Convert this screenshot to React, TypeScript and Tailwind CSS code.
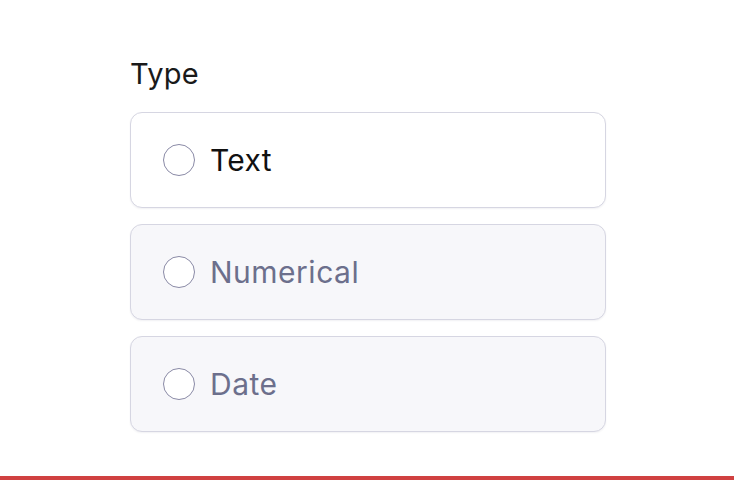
const options = [
    { label: 'Text', active: true },
    { label: 'Numerical', active: false },
    { label: 'Date', active: false },
];

export default function App() {
    return (
        <div className="relative h-[480px] w-[734px] overflow-hidden bg-white font-['Inter',sans-serif]">
            <div className="ml-[130px] w-[476px] pt-[54px]">
                <p className="mb-[18px] text-[29px] leading-[40px] tracking-[0.3px] text-[#1a1a1a]">
                    Type
                </p>
                <div className="flex flex-col gap-4">
                    {options.map((o) => (
                        <div
                            key={o.label}
                            className={
                                o.active
                                    ? 'flex h-24 items-center gap-4 rounded-xl border border-[#d6d6e2] bg-white px-8 shadow-[0_1px_2px_rgba(20,20,60,0.06)]'
                                    : 'flex h-24 items-center gap-4 rounded-xl border border-[#d6d6e2] bg-[#f7f7fa] px-8 shadow-[0_1px_2px_rgba(20,20,60,0.06)]'
                            }
                        >
                            <span className="h-8 w-8 shrink-0 rounded-full border border-[#8a8aa6] bg-white" />
                            <span
                                className={
                                    o.active
                                        ? 'ml-[-1px] text-[30px] leading-none tracking-[0.3px] text-[#111111]'
                                        : 'ml-[-1px] text-[30px] leading-none tracking-[0.5px] text-[#6c6f8c]'
                                }
                            >
                                {o.label}
                            </span>
                        </div>
                    ))}
                </div>
            </div>
            <div className="absolute bottom-0 left-0 h-1 w-full bg-[#d04141]" />
        </div>
    );
}
